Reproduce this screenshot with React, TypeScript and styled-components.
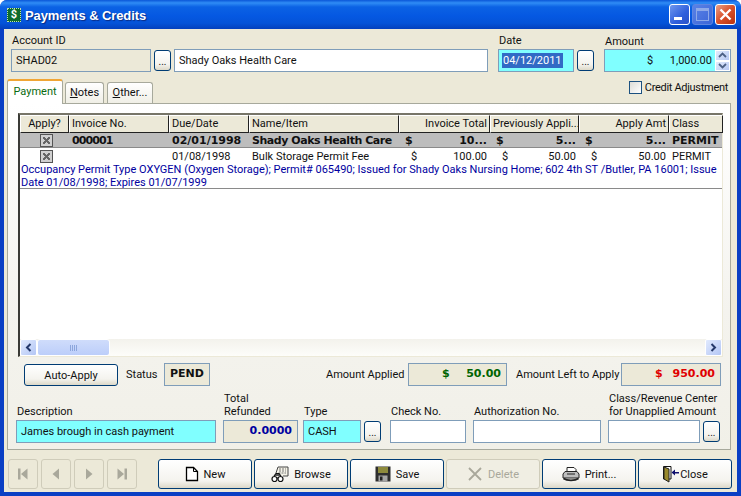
import styled, { createGlobalStyle } from "styled-components";

const GlobalStyle = createGlobalStyle`
  html, body {
    margin: 0;
    padding: 0;
    background: #ffffff;
  }
  * {
    box-sizing: border-box;
  }
`;

const COLUMNS = "49px 100px 80px 150px 91px 89px 90px 54px";

const App = (): JSX.Element => {
  return (
    <Window>
      <GlobalStyle />
      <TitleBar>
        <TitleIcon>$</TitleIcon>
        <TitleText>Payments &amp; Credits</TitleText>
        <WindowButtons>
          <WindowButton>
            <svg width="21" height="21" viewBox="0 0 21 21">
              <rect x="5" y="13" width="8" height="3" fill="#fff" />
            </svg>
          </WindowButton>
          <WindowButton $off>
            <svg width="21" height="21" viewBox="0 0 21 21">
              <rect x="4.5" y="4.5" width="12" height="12" fill="none" stroke="#8ea9e8" />
              <rect x="4" y="4" width="13" height="3" fill="#8ea9e8" />
            </svg>
          </WindowButton>
          <WindowButton $close>
            <svg width="21" height="21" viewBox="0 0 21 21">
              <path d="M5.5 5.5L15.5 15.5M15.5 5.5L5.5 15.5" stroke="#fff" strokeWidth="2.4" />
            </svg>
          </WindowButton>
        </WindowButtons>
      </TitleBar>

      <Body>
        <TopRow>
          <Field>
            <FieldLabel>Account ID</FieldLabel>
            <FieldLine>
              <Input $w={140} $tone="readonly">SHAD02</Input>
              <DotsButton>...</DotsButton>
              <Input $w={314}>Shady Oaks Health Care</Input>
            </FieldLine>
          </Field>
          <Field $ml={10}>
            <FieldLabel>Date</FieldLabel>
            <FieldLine>
              <Input $w={76} $tone="cyan">
                <Selected>04/12/2011</Selected>
              </Input>
              <DotsButton>...</DotsButton>
            </FieldLine>
          </Field>
          <Field $ml={10}>
            <FieldLabel $drop={1}>Amount</FieldLabel>
            <FieldLine $gap={0}>
              <AmountInput>
                <span>$</span>
                <span>1,000.00</span>
              </AmountInput>
              <Spinner>
                <SpinPart>
                  <svg width="9" height="6" viewBox="0 0 9 6">
                    <path d="M1 5L4.5 1.5L8 5" fill="none" stroke="#4d6185" strokeWidth="1.8" />
                  </svg>
                </SpinPart>
                <SpinPart>
                  <svg width="9" height="6" viewBox="0 0 9 6">
                    <path d="M1 1L4.5 4.5L8 1" fill="none" stroke="#4d6185" strokeWidth="1.8" />
                  </svg>
                </SpinPart>
              </Spinner>
            </FieldLine>
          </Field>
        </TopRow>

        <TabRow>
          <Tab $active $w={56}>Payment</Tab>
          <Tab $w={39}>
            <u>N</u>otes
          </Tab>
          <Tab $w={46} $ml={3}>
            <u>O</u>ther...
          </Tab>
          <CreditAdjust>
            <CheckBox />
            <CreditText>Credit Adjustment</CreditText>
          </CreditAdjust>
        </TabRow>

        <TabPanel>
          <Table>
            <HeaderRow>
              <HeaderCell $center>Apply?</HeaderCell>
              <HeaderCell>Invoice No.</HeaderCell>
              <HeaderCell>Due/Date</HeaderCell>
              <HeaderCell>Name/Item</HeaderCell>
              <HeaderCell $right>Invoice Total</HeaderCell>
              <HeaderCell>Previously Appli...</HeaderCell>
              <HeaderCell $right>Apply Amt</HeaderCell>
              <HeaderCell>Class</HeaderCell>
            </HeaderRow>

            <GroupRow>
              <Cell $center>
                <GridCheck />
              </Cell>
              <Cell $ls={-0.9}>000001</Cell>
              <Cell>02/01/1998</Cell>
              <Cell $ls={-0.45}>Shady Oaks Health Care</Cell>
              <MoneyCell>
                <span>$</span>
                <span>10...</span>
              </MoneyCell>
              <MoneyCell>
                <span>$</span>
                <span>5...</span>
              </MoneyCell>
              <MoneyCell>
                <span>$</span>
                <span>5...</span>
              </MoneyCell>
              <Cell>PERMIT</Cell>
            </GroupRow>

            <ItemRow>
              <Cell $center>
                <GridCheck />
              </Cell>
              <Cell />
              <Cell>01/08/1998</Cell>
              <Cell>Bulk Storage Permit Fee</Cell>
              <MoneyCell $inset>
                <span>$</span>
                <span>100.00</span>
              </MoneyCell>
              <MoneyCell $inset>
                <span>$</span>
                <span>50.00</span>
              </MoneyCell>
              <MoneyCell $inset>
                <span>$</span>
                <span>50.00</span>
              </MoneyCell>
              <Cell>PERMIT</Cell>
            </ItemRow>

            <NoteRow>
              Occupancy Permit Type OXYGEN (Oxygen Storage); Permit# 065490; Issued for Shady Oaks
              Nursing Home; 602 4th ST /Butler, PA 16001; Issue
              <br />
              Date 01/08/1998; Expires 01/07/1999
            </NoteRow>

            <TableFill />

            <ScrollBar>
              <ScrollArrow>
                <svg width="9" height="9" viewBox="0 0 9 9">
                  <path d="M6.5 1L3 4.5L6.5 8" fill="none" stroke="#25396b" strokeWidth="2" />
                </svg>
              </ScrollArrow>
              <ScrollThumb>
                <svg width="8" height="6" viewBox="0 0 8 6">
                  <path d="M.5 0V6M2.5 0V6M4.5 0V6M6.5 0V6" stroke="#8ca6dc" />
                </svg>
              </ScrollThumb>
              <ScrollTrack />
              <ScrollArrow>
                <svg width="9" height="9" viewBox="0 0 9 9">
                  <path d="M2.5 1L6 4.5L2.5 8" fill="none" stroke="#25396b" strokeWidth="2" />
                </svg>
              </ScrollArrow>
            </ScrollBar>
          </Table>

          <StatusRow>
            <AutoApplyButton>Auto-Apply</AutoApplyButton>
            <StatusLabel>Status</StatusLabel>
            <StatusBox>PEND</StatusBox>
            <AppliedLabel>Amount Applied</AppliedLabel>
            <TotalBox $w={99} $color="#006400">
              <span>$</span>
              <span>50.00</span>
            </TotalBox>
            <LeftLabel>Amount Left to Apply</LeftLabel>
            <TotalBox $w={100} $color="#e00000">
              <span>$</span>
              <span>950.00</span>
            </TotalBox>
          </StatusRow>

          <DetailRow>
            <Field>
              <FieldLabel>Description</FieldLabel>
              <Input $w={200} $tone="cyan">James brough in cash payment</Input>
            </Field>
            <Field $ml={7}>
              <FieldLabel>
                Total
                <br />
                Refunded
              </FieldLabel>
              <RefundBox>0.0000</RefundBox>
            </Field>
            <Field $ml={5}>
              <FieldLabel>Type</FieldLabel>
              <FieldLine>
                <Input $w={58} $tone="cyan">CASH</Input>
                <DotsButton>...</DotsButton>
              </FieldLine>
            </Field>
            <Field $ml={9}>
              <FieldLabel>Check No.</FieldLabel>
              <Input $w={76} />
            </Field>
            <Field $ml={7}>
              <FieldLabel>Authorization No.</FieldLabel>
              <Input $w={128} />
            </Field>
            <Field $ml={7}>
              <FieldLabel>
                Class/Revenue Center
                <br />
                for Unapplied Amount
              </FieldLabel>
              <FieldLine>
                <Input $w={92} />
                <DotsButton>...</DotsButton>
              </FieldLine>
            </Field>
          </DetailRow>
        </TabPanel>

        <Footer>
          <NavGroup>
            <NavButton>
              <svg width="14" height="14" viewBox="0 0 14 14">
                <path d="M2 1.5H4.5V12.5H2ZM11.5 1.5V12.5L5 7Z" fill="#a9a89b" />
              </svg>
            </NavButton>
            <NavButton>
              <svg width="14" height="14" viewBox="0 0 14 14">
                <path d="M10 1.5V12.5L3.5 7Z" fill="#a9a89b" />
              </svg>
            </NavButton>
            <NavButton>
              <svg width="14" height="14" viewBox="0 0 14 14">
                <path d="M4 1.5V12.5L10.5 7Z" fill="#a9a89b" />
              </svg>
            </NavButton>
            <NavButton>
              <svg width="14" height="14" viewBox="0 0 14 14">
                <path d="M2.5 1.5V12.5L9 7ZM9.5 1.5H12V12.5H9.5Z" fill="#a9a89b" />
              </svg>
            </NavButton>
          </NavGroup>

          <ActionGroup>
            <ActionButton>
              <svg width="14" height="16" viewBox="0 0 14 16">
                <path d="M1.5 1.5H8.5L12.5 5.5V14.5H1.5Z" fill="#fff" stroke="#000" strokeWidth="1.3" />
                <path d="M8.5 1.5V5.5H12.5" fill="none" stroke="#000" />
              </svg>
              New
            </ActionButton>
            <ActionButton>
              <svg width="18" height="18" viewBox="0 0 18 18">
                <path d="M5 8L7 2H17V11H12" fill="#f5f3e8" stroke="#444" />
                <path d="M8 4H15M8 6H15M7.5 8H15" stroke="#777" strokeDasharray="2 1" />
                <path d="M3 11L5 8.5H8L10 11" fill="#555" stroke="#111" strokeWidth="1.2" />
                <circle cx="3.5" cy="14" r="2.5" fill="#fff" stroke="#111" strokeWidth="1.2" />
                <circle cx="9.5" cy="14" r="2.5" fill="#fff" stroke="#111" strokeWidth="1.2" />
                <path d="M6 13H7" fill="none" stroke="#111" strokeWidth="1.2" />
              </svg>
              Browse
            </ActionButton>
            <ActionButton>
              <svg width="16" height="16" viewBox="0 0 16 16">
                <rect x=".5" y=".5" width="15" height="15" fill="#2e2e2e" />
                <rect x="3" y="1" width="10" height="6" fill="#8d8a3c" />
                <rect x="3.5" y="9.5" width="9" height="6" fill="#a5a5a5" />
                <rect x="5" y="10.5" width="2.5" height="4" fill="#222" />
              </svg>
              Save
            </ActionButton>
            <ActionButton disabled>
              <svg width="16" height="16" viewBox="0 0 16 16">
                <path d="M2 2L14 14M14 2L2 14" stroke="#a9a89b" strokeWidth="1.8" />
              </svg>
              Delete
            </ActionButton>
            <ActionButton>
              <svg width="18" height="16" viewBox="0 0 18 16">
                <path d="M5 6V1.5H12L14 3.5V6" fill="#fff" stroke="#222" />
                <path d="M1 8L3 5.5H15L17 8V12H1Z" fill="#bdbdbd" stroke="#222" />
                <path d="M1.5 12.5C5 15 13 15 16.5 12.5" fill="none" stroke="#222" strokeWidth="1.6" />
                <path d="M5 8H13" stroke="#222" />
              </svg>
              Print...
            </ActionButton>
            <ActionButton $tight>
              <svg width="17" height="18" viewBox="0 0 17 18">
                <path d="M1.5 1.5H9V14H1.5Z" fill="#fff" stroke="#111" />
                <path d="M2 2L7 4V17L2 14Z" fill="#9a8a2c" stroke="#222" />
                <path d="M17 7H13V4.5L9.5 7.5L13 10.5V8.5H17Z" fill="#10106e" />
              </svg>
              Close
            </ActionButton>
          </ActionGroup>
        </Footer>
      </Body>
    </Window>
  );
};

export default App;

const Window = styled.div`
  width: 741px;
  height: 496px;
  display: flex;
  flex-direction: column;
  overflow: hidden;
  background: #0a3fc4;
  border-radius: 7px 7px 0 0;
  font-family: Roboto, "Liberation Sans", Arial, sans-serif;
  font-size: 11px;
  color: #111111;
`;

const TitleBar = styled.div`
  height: 29px;
  flex: none;
  display: flex;
  align-items: center;
  padding: 0 5px 0 7px;
  background: linear-gradient(
    180deg,
    #0a56d8 0%,
    #2f8cf5 10%,
    #0b62e4 24%,
    #0558e2 55%,
    #0453d8 80%,
    #0340bd 100%
  );
`;

const TitleIcon = styled.div`
  width: 14px;
  height: 14px;
  margin-top: 1px;
  background: #0d6b2c;
  border: 1px dotted #bde0b0;
  color: #ffffff;
  font-size: 11px;
  font-weight: 700;
  line-height: 12px;
  text-align: center;
`;

const TitleText = styled.div`
  margin-left: 4px;
  margin-top: 2px;
  color: #ffffff;
  font-family: "Liberation Sans", Arial, sans-serif;
  font-size: 13px;
  font-weight: 700;
  letter-spacing: -0.1px;
  text-shadow: 1px 1px 1px #0a2a80;
`;

const WindowButtons = styled.div`
  margin-left: auto;
  margin-top: -1px;
  display: flex;
  gap: 2px;
`;

const WindowButton = styled.div<{ $off?: boolean; $close?: boolean }>`
  width: 21px;
  height: 21px;
  border: 1px solid ${(p) => (p.$off ? "#5f86e0" : "#ffffff")};
  border-radius: 3px;
  background: ${(p) =>
    p.$close
      ? "linear-gradient(135deg, #e8a088 0%, #d9502a 50%, #b8320f 100%)"
      : p.$off
      ? "linear-gradient(135deg, #5a82e6 0%, #3c66d8 100%)"
      : "linear-gradient(135deg, #6f97ee 0%, #2f5fdc 60%, #2a52c8 100%)"};
  svg {
    display: block;
    margin: -1px;
  }
`;

const Body = styled.div`
  flex: 1;
  display: flex;
  flex-direction: column;
  margin: 0 4px 4px;
  padding: 0 1px 0 3px;
  background: #ece9d8;
  min-height: 0;
`;

const TopRow = styled.div`
  height: 43px;
  flex: none;
  padding-left: 4px;
  display: flex;
  align-items: flex-end;
`;

const Field = styled.div<{ $ml?: number }>`
  display: flex;
  flex-direction: column;
  margin-left: ${(p) => p.$ml ?? 0}px;
`;

const FieldLabel = styled.div<{ $drop?: number }>`
  line-height: 13px;
  margin-bottom: 2px;
  padding-left: 1px;
  white-space: nowrap;
  position: relative;
  top: ${(p) => p.$drop ?? 0}px;
`;

const FieldLine = styled.div<{ $gap?: number }>`
  display: flex;
  align-items: center;
  gap: ${(p) => p.$gap ?? 3}px;
`;

const TONES: Record<string, string> = {
  plain: "#ffffff",
  cyan: "#80ffff",
  readonly: "#ece9d8",
};

const Input = styled.div<{ $w: number; $tone?: string }>`
  width: ${(p) => p.$w}px;
  height: 23px;
  border: 1px solid #7f9db9;
  background: ${(p) => TONES[p.$tone ?? "plain"]};
  padding: 0 4px;
  line-height: 22px;
  white-space: nowrap;
  overflow: hidden;
`;

const Selected = styled.span`
  background: #316ac5;
  color: #ffffff;
  margin-left: -1px;
  padding: 1px;
`;

const AmountInput = styled.div`
  width: 111px;
  height: 23px;
  border: 1px solid #7f9db9;
  border-right: none;
  background: #80ffff;
  display: flex;
  justify-content: space-between;
  line-height: 22px;
  padding: 0 3px 0 42px;
`;

const Spinner = styled.div`
  width: 16px;
  height: 23px;
  display: flex;
  flex-direction: column;
  border: 1px solid #7f9db9;
  border-left: none;
  background: #80ffff;
`;

const SpinPart = styled.div`
  flex: 1;
  display: flex;
  align-items: center;
  justify-content: center;
  background: linear-gradient(135deg, #e4ecfb 0%, #b6c8f3 100%);
  border: 1px solid #ffffff;
`;

const DotsButton = styled.div`
  width: 17px;
  height: 21px;
  border: 1px solid #003c74;
  border-radius: 3px;
  background: linear-gradient(180deg, #ffffff 0%, #f4f3ee 70%, #dcd8c8 100%);
  text-align: center;
  line-height: 22px;
  font-size: 10px;
`;

const TabRow = styled.div`
  height: 31px;
  flex: none;
  display: flex;
  align-items: flex-end;
  padding-left: 0;
  position: relative;
  z-index: 1;
`;

const Tab = styled.div<{ $active?: boolean; $w: number; $ml?: number }>`
  width: ${(p) => p.$w}px;
  height: ${(p) => (p.$active ? 25 : 21)}px;
  margin-left: ${(p) => p.$ml ?? (p.$active ? 0 : 2)}px;
  margin-bottom: ${(p) => (p.$active ? -1 : 0)}px;
  text-align: center;
  line-height: ${(p) => (p.$active ? 21 : 20)}px;
  border: 1px solid #a7a99c;
  border-bottom: none;
  border-radius: 3px 3px 0 0;
  border-top: ${(p) => (p.$active ? "2px solid #f0a535" : "1px solid #a7a99c")};
  background: ${(p) =>
    p.$active ? "#ffffff" : "linear-gradient(180deg, #ffffff 0%, #f0efe6 100%)"};
  color: ${(p) => (p.$active ? "#0a6a10" : "#111111")};
  white-space: nowrap;
`;

const CreditAdjust = styled.div`
  margin-left: auto;
  margin-right: 8px;
  align-self: flex-start;
  margin-top: 9px;
  display: flex;
  align-items: center;
  gap: 3px;
  white-space: nowrap;
`;

const CreditText = styled.span`
  letter-spacing: -0.3px;
`;

const CheckBox = styled.div`
  width: 13px;
  height: 13px;
  border: 1px solid #1c5180;
  background: linear-gradient(135deg, #dcdcd7 0%, #ffffff 100%);
`;

const TabPanel = styled.div`
  height: 347px;
  flex: none;
  width: 724px;
  border: 1px solid #a7a99c;
  background: linear-gradient(180deg, #ffffff 0%, #f4f3ee 60%, #f1f0e8 100%);
  padding: 9px 0 0 8px;
`;

const Table = styled.div`
  margin-left: 2px;
  width: 705px;
  height: 244px;
  display: flex;
  flex-direction: column;
  border-top: 2px solid #777568;
  border-left: 2px solid #3a3a36;
  border-right: 1px solid #ece9d8;
  border-bottom: 1px solid #ece9d8;
  background: #ffffff;
`;

const HeaderRow = styled.div`
  display: grid;
  grid-template-columns: ${COLUMNS};
  height: 18px;
  flex: none;
  background: #000000;
`;

const HeaderCell = styled.div<{ $center?: boolean; $right?: boolean }>`
  background: #ece9d8;
  border-top: 1px solid #ffffff;
  border-left: 1px solid #ffffff;
  border-right: 1px solid #222222;
  border-bottom: 1px solid #222222;
  padding: 0 2px;
  line-height: 16px;
  white-space: nowrap;
  overflow: hidden;
  text-align: ${(p) => (p.$center ? "center" : p.$right ? "right" : "left")};
`;

const GroupRow = styled.div`
  display: grid;
  grid-template-columns: ${COLUMNS};
  height: 15px;
  flex: none;
  align-items: center;
  padding-top: 1px;
  background: #bdbdbd;
  border-bottom: 1px solid #8a8a8a;
  font-family: "DejaVu Sans", Verdana, sans-serif;
  font-size: 11px;
  font-weight: 700;
  color: #111111;
`;

const ItemRow = styled.div`
  display: grid;
  grid-template-columns: ${COLUMNS};
  height: 15px;
  flex: none;
  align-items: center;
  padding-top: 1px;
`;

const Cell = styled.div<{ $center?: boolean; $ls?: number }>`
  padding-left: 3px;
  letter-spacing: ${(p) => p.$ls ?? 0}px;
  white-space: nowrap;
  overflow: ${(p) => (p.$center ? "visible" : "hidden")};
  display: ${(p) => (p.$center ? "flex" : "block")};
  justify-content: center;
`;

const MoneyCell = styled.div<{ $inset?: boolean }>`
  display: flex;
  justify-content: space-between;
  padding: 0 3px 0 ${(p) => (p.$inset ? 12 : 6)}px;
  white-space: nowrap;
`;

const GridCheck = styled.div`
  width: 13px;
  height: 13px;
  flex: none;
  border: 1px solid #555555;
  background:
    linear-gradient(45deg, transparent 44%, #666666 44%, #666666 56%, transparent 56%),
    linear-gradient(-45deg, transparent 44%, #666666 44%, #666666 56%, transparent 56%),
    #d0d0d0;
  box-shadow: inset 0 0 0 2px #d0d0d0;
`;

const NoteRow = styled.div`
  flex: none;
  height: 26px;
  padding: 1px 0 0 1px;
  line-height: 12.5px;
  color: #0000a0;
  border-bottom: 1px solid #8a8a8a;
  white-space: nowrap;
`;

const TableFill = styled.div`
  flex: 1;
`;

const ScrollBar = styled.div`
  height: 17px;
  flex: none;
  display: flex;
  background: linear-gradient(180deg, #f3f2ec 0%, #fdfdfa 100%);
`;

const ScrollArrow = styled.div`
  width: 17px;
  height: 17px;
  display: flex;
  align-items: center;
  justify-content: center;
  border: 1px solid #ffffff;
  border-radius: 2px;
  background: linear-gradient(135deg, #e1eafe 0%, #b3c6f5 100%);
`;

const ScrollThumb = styled.div`
  width: 73px;
  height: 17px;
  display: flex;
  align-items: center;
  justify-content: center;
  border: 1px solid #ffffff;
  border-radius: 3px;
  background: linear-gradient(180deg, #cfdcfb 0%, #bccefa 100%);
`;

const ScrollTrack = styled.div`
  flex: 1;
`;

const StatusRow = styled.div`
  margin-top: 6px;
  height: 23px;
  display: flex;
  align-items: center;
`;

const AutoApplyButton = styled.div`
  width: 94px;
  height: 22px;
  margin: 1px 0 0 8px;
  border: 1px solid #003c74;
  border-radius: 3px;
  background: linear-gradient(180deg, #ffffff 0%, #f4f3ee 70%, #dcd8c8 100%);
  text-align: center;
  line-height: 22px;
`;

const StatusLabel = styled.div`
  margin-left: 8px;
  width: 30px;
`;

const StatusBox = styled.div`
  width: 46px;
  height: 23px;
  margin-left: 8px;
  border: 1px solid #7f9db9;
  background: #ece9d8;
  text-align: center;
  line-height: 20px;
  font-family: "DejaVu Sans", Verdana, sans-serif;
  font-size: 11px;
  font-weight: 700;
`;

const AppliedLabel = styled.div`
  margin-left: 116px;
  width: 82px;
  white-space: nowrap;
`;

const LeftLabel = styled.div`
  margin-left: 9px;
  width: 105px;
  white-space: nowrap;
`;

const TotalBox = styled.div<{ $w: number; $color: string }>`
  width: ${(p) => p.$w}px;
  height: 23px;
  border: 1px solid #7f9db9;
  background: #ece9d8;
  display: flex;
  justify-content: space-between;
  padding: 0 5px 0 33px;
  line-height: 20px;
  color: ${(p) => p.$color};
  font-family: "DejaVu Sans", Verdana, sans-serif;
  font-size: 11px;
  font-weight: 700;
`;

const DetailRow = styled.div`
  margin-top: 6px;
  display: flex;
  align-items: flex-end;
`;

const RefundBox = styled.div`
  width: 75px;
  height: 23px;
  border: 1px solid #7f9db9;
  background: #ece9d8;
  color: #0000a0;
  text-align: right;
  padding-right: 5px;
  line-height: 20px;
  font-family: "DejaVu Sans", Verdana, sans-serif;
  font-size: 11px;
  font-weight: 700;
`;

const Footer = styled.div`
  flex: 1;
  display: flex;
  align-items: flex-start;
  padding-top: 9px;
  padding-left: 1px;
`;

const NavGroup = styled.div`
  display: flex;
  gap: 3px;
`;

const NavButton = styled.div`
  width: 30px;
  height: 30px;
  border: 1px solid #cfccba;
  border-radius: 3px;
  display: flex;
  align-items: center;
  justify-content: center;
`;

const ActionGroup = styled.div`
  margin-left: 21px;
  display: flex;
  gap: 2px;
`;

const ActionButton = styled.button<{ $tight?: boolean }>`
  width: 94px;
  height: 30px;
  padding: 0;
  display: flex;
  align-items: center;
  justify-content: center;
  gap: ${(p) => (p.$tight ? 1 : 5)}px;
  border: 1px solid #003c74;
  border-radius: 3px;
  background: linear-gradient(180deg, #ffffff 0%, #f4f3ee 75%, #dcd8c8 100%);
  font: inherit;
  color: #111111;

  &:disabled {
    border-color: #cfccba;
    background: #f0eee3;
    color: #a9a89b;
  }
`;
